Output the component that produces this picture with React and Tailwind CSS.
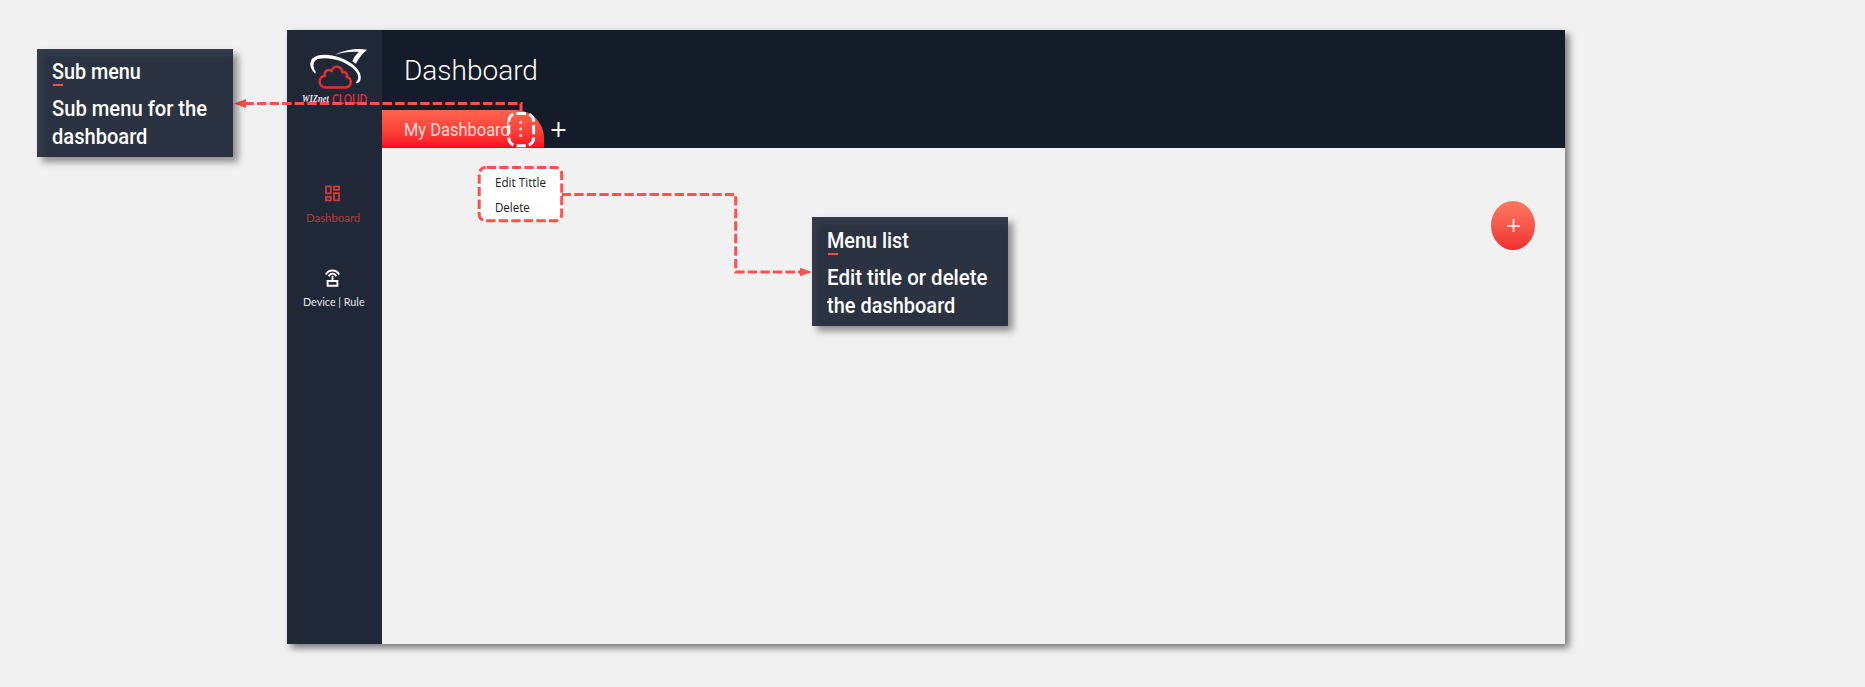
import React, { useLayoutEffect, useRef, useState } from "react";
import clsx from "clsx";

/* Single line of text condensed horizontally to a set width. */
function FitText({ width, className, children }) {
  const ref = useRef(null);
  const [scale, setScale] = useState(1);
  useLayoutEffect(() => {
    setScale(width / ref.current.offsetWidth);
  }, [width]);
  return (
    <div className="flex whitespace-nowrap" style={{ width }}>
      <span
        ref={ref}
        className={clsx("block shrink-0 origin-left", className)}
        style={{ transform: `scaleX(${scale})` }}
      >
        {children}
      </span>
    </div>
  );
}

const calloutText = "font-['Roboto'] font-medium text-[22px] leading-7 text-white";

function Callout({ className, title, titleWidth, lines }) {
  return (
    <div
      className={clsx(
        "absolute w-[196px] bg-[#2b3242] pl-[15px] shadow-[5px_5px_7px_rgba(0,0,0,0.42),inset_5px_5px_8px_rgba(75,84,100,0.35)]",
        className
      )}
    >
      <FitText width={titleWidth} className={calloutText}>{title}</FitText>
      <div className="ml-px -mt-[2px] mb-[9px] h-[2px] w-[10px] bg-[#ff4b4b]" />
      {lines.map(([text, width]) => (
        <FitText key={text} width={width} className={calloutText}>{text}</FitText>
      ))}
    </div>
  );
}

function Logo() {
  return (
    <svg className="block h-[47px] w-[70px]" viewBox="60 80 210 141" fill="none">
      <path
        d="M106 160C90 146 86 126 98 114C114 99 150 101 181 112C222 127 247 154 242 177C240 184 237 188 230 189L227 186C239 178 238 160 218 143C191 119 143 108 114 116C98 122 97 138 107 154Z"
        fill="#fff"
      />
      <path d="M164 104C190 90 224 82 261 88C247 100 236 113 228 130L217 123C222 111 228 102 237 95C211 93 190 96 164 104Z" fill="#fff" />
      <path
        d="M138 201.5C112 201 114 168 135 166C130 151 146 145 155 152C158 134 185 134 187 156C198 153 204 162 200 170C217 173 217 200 196 201.5Z"
        stroke="#e2302f"
        strokeWidth="7.5"
        strokeLinejoin="round"
      />
    </svg>
  );
}

function Sidebar() {
  return (
    <aside className="flex w-[95px] flex-col bg-[#202736]">
      <div className="pl-[13px] pt-[17px]"><Logo /></div>
      <div className="-mt-[2px] flex h-[17px] gap-[3px] pl-[15px]">
        <FitText width={27} className="font-['Liberation_Serif'] text-[10px] font-bold italic leading-[14px] text-[#e8e8ea]">WIZnet</FitText>
        <FitText width={35} className="font-['Lato'] text-[12.5px] font-bold leading-[15px] text-[#d93034]">CLOUD</FitText>
      </div>
      <div className="flex flex-col pl-[19px] pt-[76px]">
        <svg className="ml-[19px] h-[17px] w-[15px]" viewBox="0 0 15 17" fill="none" stroke="#d33d3c" strokeWidth="1.8">
          <path d="M1 1.3h4.8v7H1zM9 1.3h5v3.6H9zM9 8.2h5v7.2H9zM1 11.8h4.8v3.6H1z" />
        </svg>
        <div className="pt-[8px]">
          <FitText width={54} className="font-['Lato'] text-[12px] leading-4 text-[#b63b3e]">Dashboard</FitText>
        </div>
      </div>
      <div className="flex flex-col pl-[16px] pt-[43px]">
        <svg className="ml-[22px] h-[18px] w-[15px]" viewBox="0 0 15 18" fill="none" stroke="#fff" strokeWidth="1.9">
          <path d="M.8 5.4C4 .2 11 .2 14.2 5.4M3.7 7.2C5.5 3.8 9.5 3.8 11.3 7.2M7.5 6.8V12M2.6 12h9.8v4.7H2.6z" />
        </svg>
        <div className="pt-[7px]">
          <FitText width={62} className="font-['Lato'] text-[12px] leading-4 text-[#e4e6ea]">Device | Rule</FitText>
        </div>
      </div>
    </aside>
  );
}

function Header() {
  return (
    <header className="flex h-[118px] flex-col justify-between bg-[#151c29]">
      <div className="pl-[22px] pt-[23px]">
        <FitText width={134} className="font-['Roboto'] text-[28px] font-light leading-9 text-white">Dashboard</FitText>
      </div>
      <div className="flex h-[38px] items-center">
        <div className="flex h-full w-[162px] items-center rounded-tr-[28px] bg-linear-to-b from-[#ff6350] to-[#fb0020] pl-[22px] pt-[2px]">
          <FitText width={106} className="font-['Roboto'] text-[18px] leading-6 text-[#ffdcd8]">My Dashboard</FitText>
        </div>
        <svg className="ml-[7px] size-[15px]" viewBox="0 0 15 15" stroke="#fff" strokeWidth="2">
          <path d="M.5 8h14M7.5 0v15" />
        </svg>
      </div>
    </header>
  );
}

function SubMenu() {
  return (
    <div className="absolute left-[478px] top-[167px] flex h-[54px] w-[85px] flex-col gap-[9px] rounded-lg bg-white pl-[17px] pt-[7px]">
      <FitText width={51} className="font-['Open_Sans'] text-[13.5px] leading-4 text-[#1c1c1c]">Edit Tittle</FitText>
      <FitText width={35} className="font-['Open_Sans'] text-[13.5px] leading-4 text-[#1c1c1c]">Delete</FitText>
    </div>
  );
}

/* Dashed highlights and arrows that tie the callouts to the dashboard. */
function Connectors() {
  return (
    <svg className="pointer-events-none absolute left-0 top-0 h-[687px] w-[1865px]" viewBox="0 0 1865 687" fill="none" strokeWidth="3">
      <path d="M515 167l6-7 6 7z" fill="#fff" />
      <g stroke="#ff4f4f" strokeDasharray="9.4 3.15">
        <path d="M521 112.5V103.5H246" />
        <path d="M561.7 194.5H735.7V272H801" />
        <rect x="479.2" y="167.5" width="82.5" height="53.2" rx="6.5" strokeDashoffset="-1" />
      </g>
      <path d="M234 103.5L246 99v9zM812 272L800 267.7v8.6z" fill="#ff4f4f" />
      <rect x="508.8" y="113.4" width="24.8" height="32.4" rx="8" stroke="#fff" strokeDasharray="9.2 3.3" />
      <g fill="#ffd9d6">
        <circle cx="520.7" cy="122.3" r="1.5" />
        <circle cx="520.7" cy="129" r="1.5" />
        <circle cx="520.7" cy="135.5" r="1.5" />
      </g>
    </svg>
  );
}

export default function App() {
  return (
    <div className="relative h-[687px] w-[1865px] overflow-hidden bg-[#f1f1f1] pl-[287px] pt-[30px] font-['Roboto',sans-serif]">
      <main className="flex h-[614px] w-[1278px] bg-[#f1f1f1] shadow-[4px_4px_7px_rgba(0,0,0,0.5)]">
        <Sidebar />
        <section className="flex flex-1 flex-col">
          <Header />
          <div className="flex justify-end pr-[30px] pt-[53px]">
            <button className="flex h-[49px] w-[44px] items-center justify-center rounded-[50%] bg-linear-to-b from-[#ff7862] to-[#ee2d2f]">
              <svg className="size-[13px]" viewBox="0 0 13 13" stroke="#fff" strokeWidth="1.6">
                <path d="M0 7h13M6.5 0v13" />
              </svg>
            </button>
          </div>
        </section>
      </main>
      <SubMenu />
      <Connectors />
      <Callout
        className="left-[37px] top-[49px] h-[108px] pt-[9px]"
        title="Sub menu"
        titleWidth={89}
        lines={[["Sub menu for the", 155], ["dashboard", 95]]}
      />
      <Callout
        className="left-[812px] top-[217px] h-[109px] pt-[10px]"
        title="Menu list"
        titleWidth={82}
        lines={[["Edit title or delete", 161], ["the dashboard", 128]]}
      />
    </div>
  );
}
